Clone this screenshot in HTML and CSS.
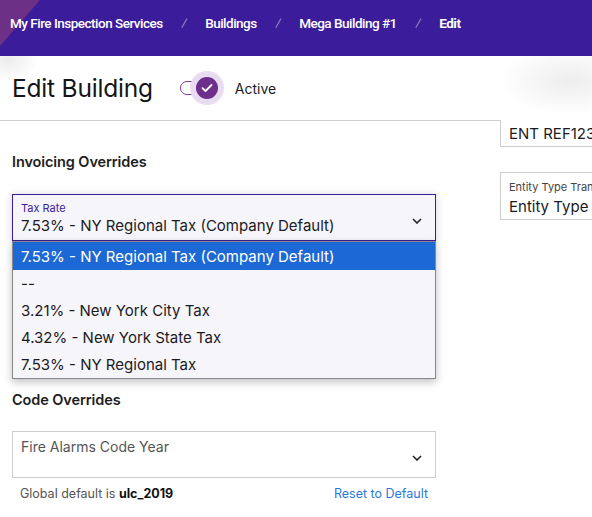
FILE: index.html
```html
<!DOCTYPE html>
<html lang="en">
<head>
<meta charset="utf-8">
<title>Edit Building</title>
<link rel="stylesheet" href="styles.css">
</head>
<body>
<header class="topbar">
  <nav class="crumbs">
    <span class="crumb">My Fire Inspection Services</span>
    <span class="sep">/</span>
    <span class="crumb">Buildings</span>
    <span class="sep">/</span>
    <span class="crumb">Mega Building #1</span>
    <span class="sep">/</span>
    <span class="crumb current">Edit</span>
  </nav>
</header>
<div class="page">
  <main class="main">
    <div class="titlebar">
      <h1 class="title">Edit Building</h1>
      <div class="toggle">
        <span class="track"></span>
        <span class="halo">
          <span class="thumb">
            <svg width="12" height="10" viewBox="0 0 12 10"><path d="M1.5 5.2 L4.5 8 L10.5 2" fill="none" stroke="#fff" stroke-width="1.8" stroke-linecap="round" stroke-linejoin="round"/></svg>
          </span>
        </span>
      </div>
      <span class="toggle-label">Active</span>
    </div>
    <div class="content">
      <h2 class="section-title">Invoicing Overrides</h2>
      <div class="select-wrap">
        <div class="select focused">
          <div class="select-text">
            <span class="select-label">Tax Rate</span>
            <span class="select-value">7.53% - NY Regional Tax (Company Default)</span>
          </div>
          <svg class="chev" width="10" height="6" viewBox="0 0 10 6"><path d="M1 1 L5 5 L9 1" fill="none" stroke="#222" stroke-width="1.6"/></svg>
        </div>
        <ul class="options">
          <li class="option selected">7.53% - NY Regional Tax (Company Default)</li>
          <li class="option">--</li>
          <li class="option">3.21% - New York City Tax</li>
          <li class="option">4.32% - New York State Tax</li>
          <li class="option">7.53% - NY Regional Tax</li>
        </ul>
      </div>
      <h2 class="section-title code">Code Overrides</h2>
      <div class="select plain">
        <div class="select-text">
          <span class="placeholder">Fire Alarms Code Year</span>
        </div>
        <svg class="chev" width="10" height="6" viewBox="0 0 10 6"><path d="M1 1 L5 5 L9 1" fill="none" stroke="#222" stroke-width="1.6"/></svg>
      </div>
      <div class="helper">
        <span>Global default is <b>ulc_2019</b></span>
        <a class="reset" href="#">Reset to Default</a>
      </div>
    </div>
  </main>
  <aside class="side">
    <div class="field first"><span class="field-value">ENT REF123</span></div>
    <div class="field second">
      <span class="field-label">Entity Type Translation</span>
      <span class="field-value">Entity Type</span>
    </div>
  </aside>
</div>
</body>
</html>
```
FILE: styles.css
```css
* { box-sizing: border-box; }
html, body { margin: 0; padding: 0; }
body {
  width: 592px;
  height: 517px;
  overflow: hidden;
  font-family: Inter, "Noto Sans", sans-serif;
  color: #1b1b1f;
  background: #fff;
}
.topbar {
  position: relative;
  height: 56px;
  background: #3b1c9b;
  display: flex;
  align-items: flex-start;
  padding: 14px 0 0 10px;
  overflow: hidden;
}
.topbar::before {
  content: "";
  position: absolute;
  left: 0;
  top: 0;
  width: 40px;
  height: 46px;
  background: #6c3186;
  clip-path: polygon(0 0, 100% 0, 0 100%);
}
.crumbs {
  position: relative;
  display: flex;
  align-items: center;
  line-height: 18px;
  font-family: Roboto, "Liberation Sans", sans-serif;
  font-weight: 500;
  font-size: 13.5px;
  letter-spacing: -0.5px;
  color: #fff;
}
.sep {
  color: #a89bd0;
  font-weight: 400;
  font-size: 12px;
  margin: 0 19px;
  transform: skewX(-10deg);
}
.crumb.current { font-weight: 700; }
.page {
  display: flex;
}
.main {
  width: 500px;
  flex: none;
}
.titlebar {
  height: 65px;
  border-bottom: 1px solid #cfcfcf;
  display: flex;
  align-items: center;
  padding-left: 12px;
  background: radial-gradient(ellipse 30px 22px at 8px 4px, #ececec, rgba(255,255,255,0) 100%);
}
.title {
  margin: 0;
  font-size: 24.5px;
  font-weight: 400;
  letter-spacing: -0.2px;
  color: #151515;
  margin-right: 25px;
}
.toggle {
  position: relative;
  width: 46px;
  height: 34px;
  display: flex;
  align-items: center;
}
.track {
  width: 28px;
  height: 14px;
  border: 1.5px solid #7a3c93;
  border-radius: 7px;
  background: #fff;
  margin-left: 2px;
}
.halo {
  position: absolute;
  left: 12px;
  top: 0;
  width: 34px;
  height: 34px;
  border-radius: 50%;
  background: #eadcf0;
  display: flex;
  align-items: center;
  justify-content: center;
}
.thumb {
  width: 22px;
  height: 22px;
  border-radius: 50%;
  background: #6e2f8c;
  display: flex;
  align-items: center;
  justify-content: center;
}
.toggle-label {
  margin-left: 11px;
  font-size: 14px;
  color: #1b1b1f;
}
.content {
  padding: 0 12px;
  width: 448px;
}
.section-title {
  margin: 0;
  font-size: 14.5px;
  font-weight: 600;
  color: #1e1e22;
  letter-spacing: -0.1px;
}
.content > .section-title:first-child {
  margin-top: 32px;
}
.select-wrap {
  position: relative;
  margin-top: 24px;
  margin-bottom: 150px;
  width: 424px;
  border-radius: 2px;
  box-shadow: 0 1px 10px rgba(0,0,0,0.18);
}
.select {
  height: 47px;
  display: flex;
  align-items: center;
  justify-content: space-between;
  padding: 0 13px 0 8px;
  width: 424px;
}
.select.focused {
  border: 1px solid #3b1c9b;
  background: #f6f5fa;
  align-items: flex-start;
  padding-top: 6px;
}
.select.focused .chev { margin-top: 17px; }
.select.plain {
  border: 1px solid #cdcdcd;
  background: #fff;
  margin-top: 23px;
  align-items: flex-start;
  padding-top: 6px;
}
.select.plain .chev { margin-top: 17px; }
.select-text {
  display: flex;
  flex-direction: column;
}
.select-label {
  font-size: 11px;
  color: #3b1c9b;
  line-height: 14px;
}
.select-value {
  font-size: 15px;
  line-height: 20px;
  margin-top: 1px;
  color: #1b1b1f;
}
.placeholder {
  font-size: 14px;
  color: #555;
  line-height: 18px;
}
.options {
  position: absolute;
  left: 0;
  top: 47px;
  width: 424px;
  margin: 0;
  padding: 0;
  list-style: none;
  background: #f6f5fa;
  border: 1px solid #888;
  box-shadow: 0 3px 8px rgba(0,0,0,0.25);
}
.option {
  height: 27px;
  line-height: 28px;
  padding-left: 8px;
  font-size: 15px;
  color: #1b1b1f;
}
.option.selected {
  background: #1c68d4;
  color: #fff;
  height: 28px;
  line-height: 29px;
}
.helper {
  display: flex;
  justify-content: space-between;
  padding: 0 8px;
  margin-top: 8px;
  font-size: 12.5px;
  color: #555;
  width: 424px;
}
.helper b { color: #111; font-weight: 700; }
.reset {
  color: #2b78dc;
  text-decoration: none;
}
.side {
  flex: 1;
  min-width: 0;
  overflow: hidden;
  padding-top: 64px;
  background: radial-gradient(ellipse 70px 35px at 70px 25px, #ededed, rgba(255,255,255,0) 100%);
  background-repeat: no-repeat;
  background-size: 100% 64px;
}
.field {
  border: 1px solid #cdcdcd;
  border-right: none;
  padding-left: 8px;
  display: flex;
  flex-direction: column;
  overflow: hidden;
  white-space: nowrap;
}
.field.first {
  height: 27px;
  border-top: none;
  padding-top: 4px;
}
.field.second {
  height: 48px;
  margin-top: 25px;
  padding-top: 7px;
}
.field-label {
  font-size: 11px;
  color: #444;
  line-height: 14px;
}
.field-value {
  font-size: 15px;
  color: #1b1b1f;
  line-height: 20px;
}
.field.second .field-value { margin-top: 3px; }
```
